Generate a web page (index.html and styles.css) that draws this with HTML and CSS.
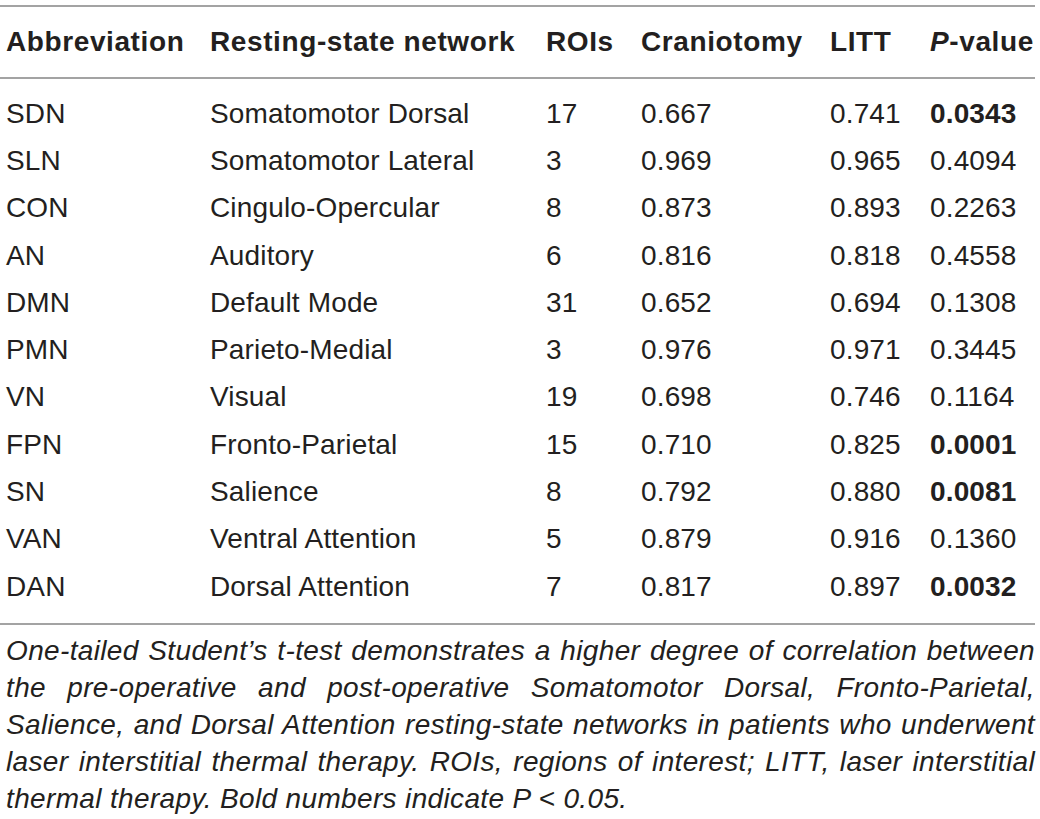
FILE: index.html
```html
<!DOCTYPE html>
<html>
<head>
<meta charset="utf-8">
<link rel="stylesheet" href="styles.css">
</head>
<body>
<div class="page">
<table class="data">
  <colgroup>
    <col class="c1"><col class="c2"><col class="c3"><col class="c4"><col class="c5"><col class="c6">
  </colgroup>
  <thead>
    <tr>
      <th>Abbreviation</th>
      <th>Resting-state network</th>
      <th>ROIs</th>
      <th>Craniotomy</th>
      <th>LITT</th>
      <th><i>P</i>-value</th>
    </tr>
  </thead>
  <tbody>
    <tr class="first"><td>SDN</td><td>Somatomotor Dorsal</td><td>17</td><td>0.667</td><td>0.741</td><td class="sig">0.0343</td></tr>
    <tr><td>SLN</td><td>Somatomotor Lateral</td><td>3</td><td>0.969</td><td>0.965</td><td>0.4094</td></tr>
    <tr><td>CON</td><td>Cingulo-Opercular</td><td>8</td><td>0.873</td><td>0.893</td><td>0.2263</td></tr>
    <tr><td>AN</td><td>Auditory</td><td>6</td><td>0.816</td><td>0.818</td><td>0.4558</td></tr>
    <tr><td>DMN</td><td>Default Mode</td><td>31</td><td>0.652</td><td>0.694</td><td>0.1308</td></tr>
    <tr><td>PMN</td><td>Parieto-Medial</td><td>3</td><td>0.976</td><td>0.971</td><td>0.3445</td></tr>
    <tr><td>VN</td><td>Visual</td><td>19</td><td>0.698</td><td>0.746</td><td>0.1164</td></tr>
    <tr><td>FPN</td><td>Fronto-Parietal</td><td>15</td><td>0.710</td><td>0.825</td><td class="sig">0.0001</td></tr>
    <tr><td>SN</td><td>Salience</td><td>8</td><td>0.792</td><td>0.880</td><td class="sig">0.0081</td></tr>
    <tr><td>VAN</td><td>Ventral Attention</td><td>5</td><td>0.879</td><td>0.916</td><td>0.1360</td></tr>
    <tr class="last"><td>DAN</td><td>Dorsal Attention</td><td>7</td><td>0.817</td><td>0.897</td><td class="sig">0.0032</td></tr>
  </tbody>
</table>
<p class="note">One-tailed Student’s t-test demonstrates a higher degree of correlation between the pre-operative and post-operative Somatomotor Dorsal, Fronto-Parietal, Salience, and Dorsal Attention resting-state networks in patients who underwent laser interstitial thermal therapy. ROIs, regions of interest; LITT, laser interstitial thermal therapy. Bold numbers indicate P &lt; 0.05.</p>
</div>
</body>
</html>
```
FILE: styles.css
```css
html, body {
  margin: 0;
  padding: 0;
  background: #ffffff;
}
.page {
  width: 1035px;
  padding-top: 5px;
  font-family: "Liberation Sans", Arial, sans-serif;
  color: #231f20;
}
.data {
  width: 1035px;
  border-collapse: collapse;
  table-layout: fixed;
  font-size: 28px;
}
.c1 { width: 204px; }
.c2 { width: 336px; }
.c3 { width: 95px; }
.c4 { width: 189px; }
.c5 { width: 100px; }
.c6 { width: 111px; }
.data th {
  text-align: left;
  font-weight: bold;
  letter-spacing: 0.6px;
  padding: 0 0 0 6px;
  height: 70px;
  border-top: 2px solid #a3a3a3;
  border-bottom: 2px solid #a3a3a3;
  white-space: nowrap;
}
.data td {
  padding: 0 0 0 6px;
  height: 47.3px;
  line-height: 30px;
  letter-spacing: 0.15px;
  white-space: nowrap;
}
.data tr.first td {
  padding-top: 11px;
}
.data tr.last td {
  padding-bottom: 13px;
  border-bottom: 2px solid #a3a3a3;
}
.data td.sig {
  font-weight: bold;
}
.note {
  margin: 7px 0 0 0;
  padding: 0 0 0 6px;
  font-size: 28px;
  font-style: italic;
  letter-spacing: 0.35px;
  line-height: 37px;
  text-align: justify;
}
```
